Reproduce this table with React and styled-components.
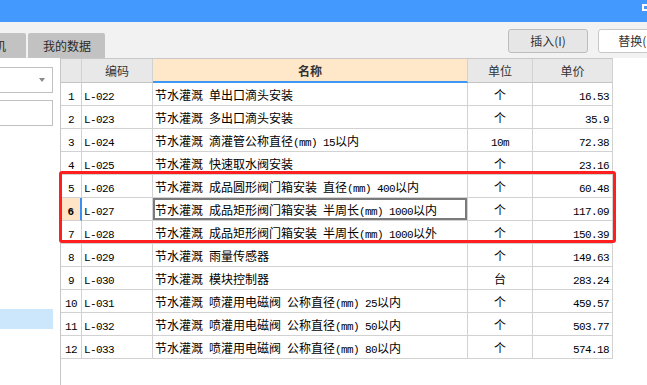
import React from "react"
import styled, { createGlobalStyle, css } from "styled-components"

const GlobalStyle = createGlobalStyle`
  html, body {
    margin: 0;
    padding: 0;
    background: #ffffff;
    overflow: hidden;
  }
  * {
    box-sizing: border-box;
  }
`

const UI_FONT = `"Noto Sans CJK SC", "Noto Sans", sans-serif`

const Page = styled.div`
  width: 647px;
  height: 385px;
  display: flex;
  flex-direction: column;
  font-family: ${UI_FONT};
  overflow: hidden;
`

const TitleBar = styled.div`
  height: 22px;
  flex: none;
  background: #4499ff;
  display: flex;
  justify-content: flex-end;
  align-items: flex-start;
`

const WinButton = styled.div`
  width: 8px;
  height: 7px;
  margin-top: 4px;
  margin-right: -3px;
  border: 2px solid #ffffff;
`

const Toolbar = styled.div`
  height: 36px;
  flex: none;
  background: #f2f2f2;
  display: flex;
  align-items: flex-start;
`

const Tabs = styled.div`
  align-self: flex-end;
  display: flex;
  gap: 2px;
`

const Tab = styled.div`
  height: 25px;
  padding: 0 ${(p) => p.$right || 14}px 0 15px;
  margin-left: ${(p) => p.$shift || 0}px;
  background: #c2c2c2;
  border-radius: 2px 2px 0 0;
  color: #2a2a2a;
  font-size: 12px;
  line-height: 25px;
  white-space: nowrap;
`

const Actions = styled.div`
  margin-left: auto;
  margin-right: -31px;
  margin-top: 7px;
  display: flex;
  gap: 10px;
`

const ActionButton = styled.div`
  width: 80px;
  height: 24px;
  border-radius: 3px;
  border: 1px solid ${(p) => (p.$primary ? "#bdbdbd" : "#c8c8c8")};
  background: ${(p) => (p.$primary ? "#e6e6e6" : "#ffffff")};
  color: #333333;
  font-size: 12px;
  line-height: 22px;
  text-align: center;
`

const Main = styled.div`
  flex: 1;
  display: flex;
  align-items: stretch;
`

const LeftPanel = styled.div`
  width: 61px;
  flex: none;
  border-right: 1px solid #c6c6c6;
  padding-top: 9px;
  display: flex;
  flex-direction: column;
  gap: 7px;
`

const Select = styled.div`
  position: relative;
  margin-left: -1px;
  width: 54px;
  height: 26px;
  border: 1px solid #c0c0c0;
  background: #ffffff;

  &::after {
    content: "";
    position: absolute;
    right: 7px;
    top: 10px;
    border-left: 3px solid transparent;
    border-right: 3px solid transparent;
    border-top: 4px solid #8a8a8a;
  }
`

const TextBox = styled.div`
  margin-left: -1px;
  width: 54px;
  height: 26px;
  border: 1px solid #c0c0c0;
  background: #ffffff;
`

const TreeItem = styled.div`
  width: 53px;
  height: 20px;
  margin-top: ${(p) => p.$gap || 0}px;
  background: ${(p) => (p.$active ? "#cce6fb" : "transparent")};
`

const GridWrap = styled.div`
  position: relative;
  align-self: flex-start;
  border-top: 1px solid #c8c8c8;
`

const Grid = styled.div`
  display: grid;
  grid-template-columns: 21px 71px 315px 65px 80px;
  color: #000000;
`

const cellBase = css`
  border-right: 1px solid #d2d2d2;
  border-bottom: 1px solid #d2d2d2;
  font-size: 12px;
  white-space: nowrap;
  overflow: hidden;
  display: flex;
  align-items: center;
`

const HeadCell = styled.div`
  ${cellBase};
  height: 24px;
  justify-content: center;
  color: #333333;
  border-bottom-color: #c4c4c4;
  background: ${(p) => (p.$active ? "#ffe8c9" : "#e8e8e8")};
  font-weight: ${(p) => (p.$active ? 700 : 400)};
  ${(p) =>
    p.$active &&
    css`
      border-bottom: 2px solid #3d98f5;
    `}
`

const Cell = styled.div`
  ${cellBase};
  height: 23px;
  font-family: "Noto Sans CJK SC", sans-serif;
  justify-content: ${(p) =>
    p.$align === "center" ? "center" : p.$align === "right" ? "flex-end" : "flex-start"};
  padding: 0 ${(p) => (p.$align === "right" ? 3 : 0)}px 0
    ${(p) => (p.$align === "left" ? 2 : 0)}px;
  ${(p) =>
    p.$focus &&
    css`
      box-shadow: inset 0 0 0 2px #7b7b7b;
    `}
`

const RowNum = styled(Cell)`
  background: ${(p) => (p.$current ? "#ffe5c6" : "#ffffff")};
  font-weight: ${(p) => (p.$current ? 700 : 400)};
  ${(p) =>
    p.$current &&
    css`
      border-right: 2px solid #3b8ff0;
    `}
`

const CellText = styled.span`
  white-space: pre;
`

const Ascii = styled.span`
  font-family: "Liberation Mono", monospace;
  font-size: 11px;
  letter-spacing: -0.6px;
  white-space: pre;
`

const Highlight = styled.div`
  position: absolute;
  left: -2px;
  top: 112px;
  width: 557px;
  height: 72px;
  border: 3px solid #ff1f1f;
  border-radius: 3px;
  pointer-events: none;
`

const mixed = (text) => (
  <CellText>
    {text
      .split(/([\x00-\x7f]+)/)
      .filter(Boolean)
      .map((part, i) =>
        /^[\x00-\x7f]+$/.test(part) ? <Ascii key={i}>{part}</Ascii> : part
      )}
  </CellText>
)

const rows = [
  ["L-022", "节水灌溉 单出口滴头安装", "个", "16.53"],
  ["L-023", "节水灌溉 多出口滴头安装", "个", "35.9"],
  ["L-024", "节水灌溉 滴灌管公称直径(mm) 15以内", "10m", "72.38"],
  ["L-025", "节水灌溉 快速取水阀安装", "个", "23.16"],
  ["L-026", "节水灌溉 成品圆形阀门箱安装 直径(mm) 400以内", "个", "60.48"],
  ["L-027", "节水灌溉 成品矩形阀门箱安装 半周长(mm) 1000以内", "个", "117.09"],
  ["L-028", "节水灌溉 成品矩形阀门箱安装 半周长(mm) 1000以外", "个", "150.39"],
  ["L-029", "节水灌溉 雨量传感器", "个", "149.63"],
  ["L-030", "节水灌溉 模块控制器", "台", "283.24"],
  ["L-031", "节水灌溉 喷灌用电磁阀 公称直径(mm) 25以内", "个", "459.57"],
  ["L-032", "节水灌溉 喷灌用电磁阀 公称直径(mm) 50以内", "个", "503.77"],
  ["L-033", "节水灌溉 喷灌用电磁阀 公称直径(mm) 80以内", "个", "574.18"],
]

const currentRow = 6

const App = () => {
  return (
    <Page>
      <GlobalStyle />
      <TitleBar>
        <WinButton />
      </TitleBar>
      <Toolbar>
        <Tabs>
          <Tab $shift={-21} $right={20}>
            机
          </Tab>
          <Tab>我的数据</Tab>
        </Tabs>
        <Actions>
          <ActionButton $primary>插入(I)</ActionButton>
          <ActionButton>替换(R)</ActionButton>
        </Actions>
      </Toolbar>
      <Main>
        <LeftPanel>
          <Select />
          <TextBox />
          <TreeItem $gap={176} $active />
        </LeftPanel>
        <GridWrap>
          <Grid>
            <HeadCell />
            <HeadCell>编码</HeadCell>
            <HeadCell $active>名称</HeadCell>
            <HeadCell>单位</HeadCell>
            <HeadCell>单价</HeadCell>
            {rows.map(([code, name, unit, price], i) => {
              const n = i + 1
              const current = n === currentRow
              return (
                <React.Fragment key={code}>
                  <RowNum $align="center" $current={current}>
                    {mixed(String(n))}
                  </RowNum>
                  <Cell $align="left">{mixed(code)}</Cell>
                  <Cell $align="left" $focus={current}>
                    {mixed(name)}
                  </Cell>
                  <Cell $align="center">{mixed(unit)}</Cell>
                  <Cell $align="right">{mixed(price)}</Cell>
                </React.Fragment>
              )
            })}
          </Grid>
          <Highlight />
        </GridWrap>
      </Main>
    </Page>
  )
}

export default App
